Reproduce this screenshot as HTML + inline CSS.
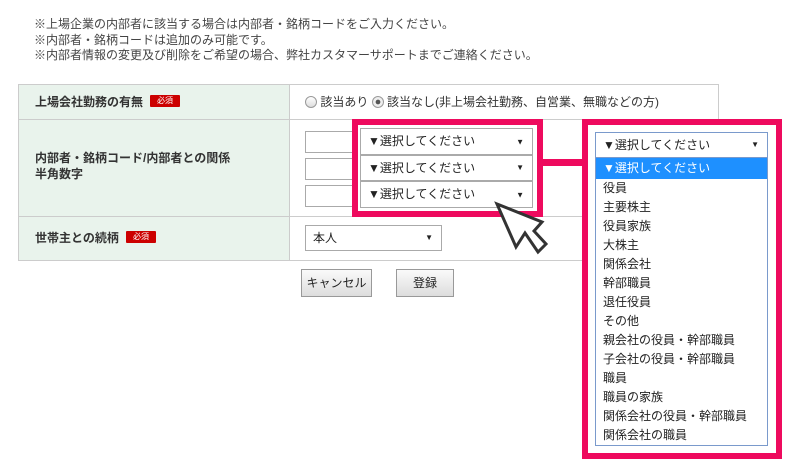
<!DOCTYPE html>
<html><head><meta charset="utf-8"><style>
body{margin:0;width:800px;height:476px;background:#fff;font-family:"Liberation Sans","Noto Sans CJK JP",sans-serif;color:#333;position:relative;overflow:hidden}
.a{position:absolute}
.note{left:34px;top:17px;font-size:12px;line-height:15.5px;color:#444}
.cell{position:absolute;border:1px solid #ccc;box-sizing:border-box}
.lab{background:#e9f3ec;font-size:12px;font-weight:bold;color:#333}
.req{position:absolute;background:#c00;color:#fff;font-size:8px;line-height:12px;height:12px;width:30px;text-align:center;border-radius:1px}
.inp{position:absolute;border:1px solid #aaa;background:#fff;box-sizing:border-box}
.sel{position:absolute;border:1px solid #aaa;background:#fff;box-sizing:border-box;font-size:12px;padding-left:7px;color:#222}
.sel:after{content:"▼";position:absolute;right:8px;font-size:8px;top:50%;transform:translateY(-50%)}
.btn{position:absolute;border:1px solid #999;background:linear-gradient(#fafafa,#ddd);font-size:12px;text-align:center;box-sizing:border-box;line-height:25px;color:#222}
.list{left:595px;top:158px;width:173px;height:288px;border:1px solid #7a9acc;box-sizing:border-box;border-top:none;background:#fff;font-size:12px;color:#222}
.list div{height:19px;line-height:19px;padding-left:7px}
</style></head><body>
<div class="a note">※上場企業の内部者に該当する場合は内部者・銘柄コードをご入力ください。<br>※内部者・銘柄コードは追加のみ可能です。<br>※内部者情報の変更及び削除をご希望の場合、弊社カスタマーサポートまでご連絡ください。</div>

<div class="cell lab" style="left:18px;top:84px;width:272px;height:36px;line-height:34px;padding-left:16px">上場会社勤務の有無</div>
<div class="cell" style="left:289px;top:84px;width:430px;height:36px"></div>
<div class="cell lab" style="left:18px;top:119px;width:272px;height:98px;padding:30px 0 0 16px;line-height:16px">内部者・銘柄コード/内部者との関係<br>半角数字</div>
<div class="cell" style="left:289px;top:119px;width:430px;height:98px"></div>
<div class="cell lab" style="left:18px;top:216px;width:272px;height:45px;line-height:43px;padding-left:16px">世帯主との続柄</div>
<div class="cell" style="left:289px;top:216px;width:430px;height:45px"></div>
<div class="req" style="left:150px;top:95px">必須</div>
<div class="req" style="left:126px;top:231px">必須</div>

<div class="a" style="left:305px;top:94px;font-size:12px;line-height:16px;color:#333">
<span style="display:inline-block;width:12px;height:12px;border:1px solid #999;border-radius:50%;background:linear-gradient(#fff,#ddd);vertical-align:-2px;box-sizing:border-box"></span> 該当あり <span style="display:inline-block;width:12px;height:12px;border:1px solid #999;border-radius:50%;background:radial-gradient(#555 30%,#eee 36%);vertical-align:-2px;box-sizing:border-box"></span> 該当なし(非上場会社勤務、自営業、無職などの方)</div>

<div class="inp" style="left:305px;top:131px;width:50px;height:22px"></div>
<div class="inp" style="left:305px;top:158px;width:50px;height:22px"></div>
<div class="inp" style="left:305px;top:185px;width:50px;height:22px"></div>

<div class="a" style="left:352px;top:119px;width:191px;height:98px;border:6px solid #ee0a5e;box-sizing:border-box;background:#fff"></div>
<div class="sel" style="left:360px;top:128px;width:173px;height:27px;line-height:25px">▼選択してください</div>
<div class="sel" style="left:360px;top:155px;width:173px;height:26px;line-height:24px">▼選択してください</div>
<div class="sel" style="left:360px;top:181px;width:173px;height:27px;line-height:25px">▼選択してください</div>

<div class="a" style="left:543px;top:159px;width:40px;height:7px;background:#ee0a5e"></div>

<div class="sel" style="left:305px;top:225px;width:137px;height:26px;line-height:24px">本人</div>

<div class="btn" style="left:301px;top:269px;width:71px;height:28px;line-height:26px">キャンセル</div>
<div class="btn" style="left:396px;top:269px;width:58px;height:28px;line-height:26px">登録</div>

<div class="a" style="left:582px;top:119px;width:200px;height:340px;border:6px solid #ee0a5e;box-sizing:border-box;background:#fff"></div>
<div class="sel" style="left:595px;top:132px;width:173px;height:26px;line-height:24px;border-color:#7a9acc">▼選択してください</div>
<div class="a list">
<div style="background:#1e90ff;color:#fff;height:21px;line-height:21px">▼選択してください</div>
<div>役員</div><div>主要株主</div><div>役員家族</div><div>大株主</div><div>関係会社</div><div>幹部職員</div><div>退任役員</div><div>その他</div><div>親会社の役員・幹部職員</div><div>子会社の役員・幹部職員</div><div>職員</div><div>職員の家族</div><div>関係会社の役員・幹部職員</div><div>関係会社の職員</div>
</div>

<svg class="a" style="left:0;top:0" width="800" height="476"><path d="M497 204 L516 247 L525 233 L538 252 L546 244 L534 231 L542 222 Z" fill="#fff" stroke="#333" stroke-width="3" stroke-linejoin="miter"/></svg>
</body></html>
